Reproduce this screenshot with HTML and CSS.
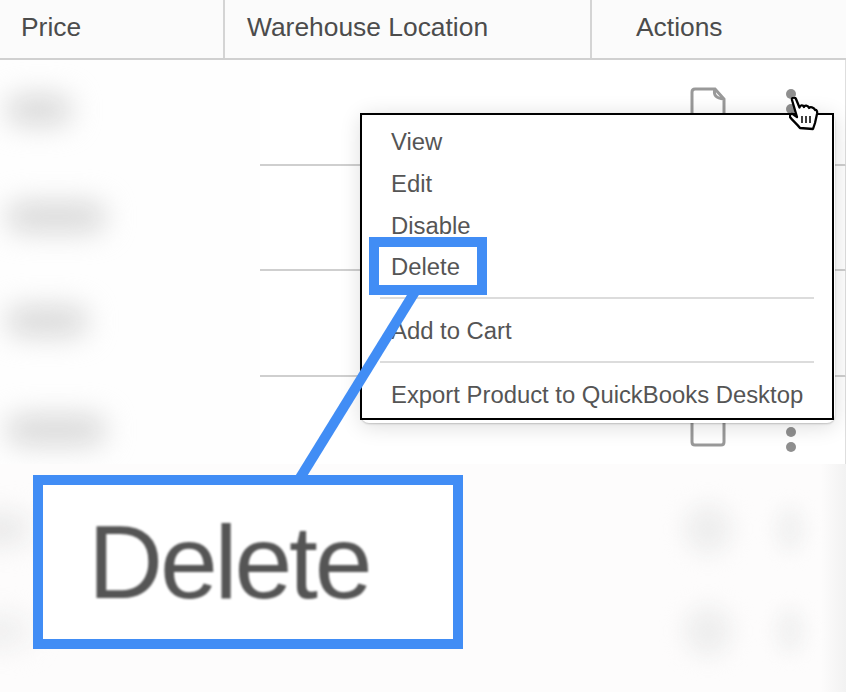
FILE: index.html
```html
<!DOCTYPE html>
<html lang="en">
<head>
  <meta charset="UTF-8" />
  <title>Products</title>
  <link rel="stylesheet" href="styles.css">
</head>
<body>
  <div class="page">

    <div class="head">
      <div class="head-cell price">Price</div>
      <div class="head-cell location">Warehouse Location</div>
      <div class="head-cell actions">Actions</div>
    </div>

    <div class="row">
      <div class="row-left"><span class="blob b1"></span></div>
      <div class="row-right">
        <svg class="doc" width="36" height="37" viewBox="0 0 36 37"><path d="M5 2 H25 L34 12 V32 Q34 35 31 35 H5 Q2 35 2 32 V5 Q2 2 5 2 Z M25 2 Q22 11 34 12" fill="none" stroke="#999" stroke-width="3"/></svg>
        <div class="dots"><i></i><i></i><i></i></div>
      </div>
    </div>
    <div class="row">
      <div class="row-left"><span class="blob b2"></span></div>
      <div class="row-right"></div>
    </div>
    <div class="row">
      <div class="row-left"><span class="blob b3"></span></div>
      <div class="row-right"></div>
    </div>
    <div class="row row-short">
      <div class="row-left"><span class="blob b4"></span></div>
      <div class="row-right">
        <svg class="doc" width="36" height="37" viewBox="0 0 36 37"><path d="M5 2 H25 L34 12 V32 Q34 35 31 35 H5 Q2 35 2 32 V5 Q2 2 5 2 Z" fill="none" stroke="#999" stroke-width="3"/></svg>
        <div class="dots"><i></i><i></i><i></i></div>
      </div>
    </div>

    <div class="faded">
      <div class="faded-row">
        <span class="blob b5"></span>
        <span class="blob-icon"></span>
        <span class="blob-dots"></span>
      </div>
      <div class="faded-row">
        <span class="blob b6"></span>
        <span class="blob-icon"></span>
        <span class="blob-dots"></span>
      </div>
    </div>

    <div class="menu">
      <div class="menu-item">View</div>
      <div class="menu-item">Edit</div>
      <div class="menu-item">Disable</div>
      <div class="menu-item">Delete</div>
      <div class="menu-line"></div>
      <div class="menu-item">Add to Cart</div>
      <div class="menu-line"></div>
      <div class="menu-item">Export Product to QuickBooks Desktop</div>
    </div>
    <div class="menu-outline"></div>

    <svg class="hand" width="30" height="34" viewBox="0 0 30 34">
      <path d="M3 3 C2.5 .5 6 -.5 7 2 L10.5 10.5 C11 8 14 7.5 15 10 C15.5 8 19 8 20 11 C21 9.5 25 10 26 13 C27.5 12.5 28.5 14 28 17 L26 26 L24 32 L11 31 C8 27 3 23 1 20 C0 17 3 16 5 18 L8 20 Z" fill="#fff" stroke="#000" stroke-width="2.3" stroke-linejoin="round"/>
      <path d="M13 19 V26 M17 19 V26 M21 19 V26" stroke="#000" stroke-width="1.5"/>
    </svg>

    <svg class="connector" width="846" height="692" viewBox="0 0 846 692">
      <path d="M416 290 L300 478" stroke="#418df5" stroke-width="10"/>
    </svg>
    <div class="mark"></div>
    <div class="callout"><span class="callout-text">Delete</span></div>

  </div>
</body>
</html>
```

FILE: styles.css
```css
body {
  margin: 0;
  background: #fff;
  font-family: "Liberation Sans", Arial, sans-serif;
  color: #555;
}

.page {
  position: relative;
  width: 846px;
  height: 692px;
  overflow: hidden;
}

/* table header */
.head {
  display: grid;
  grid-template-columns: 225px 367px 1fr;
  height: 58px;
  background: #fbfbfb;
  border-bottom: 2px solid #d0d0d0;
  font-size: 26.4px;
  color: #4c4c4c;
}

.head-cell {
  padding-top: 11px;
  line-height: 32px;
}

.price {
  padding-left: 21px;
  border-right: 2px solid #d4d4d4;
  box-sizing: border-box;
}

.location {
  padding-left: 22px;
  border-right: 2px solid #d4d4d4;
  box-sizing: border-box;
}

.actions {
  padding-left: 44px;
}

/* rows */
.row {
  display: grid;
  grid-template-columns: 260px 1fr;
  height: 105.5px;
}

.row-short {
  height: 87px;
}

.row-left {
  position: relative;
  overflow: hidden;
  background: #fefefe;
}

.row-right {
  display: flex;
  justify-content: flex-end;
  align-items: flex-start;
  gap: 60px;
  padding: 27px 49px 0 0;
  border-bottom: 2px solid #cfcfcf;
  border-right: 1px solid #dedede;
}

.row-short .row-right {
  padding-top: 33px;
  border-bottom: 0;
}

.doc {
  display: block;
}

.dots {
  display: flex;
  flex-direction: column;
  gap: 5px;
  padding: 2px 0 0;
}

.dots i {
  display: block;
  width: 10px;
  height: 10px;
  border-radius: 50%;
  background: #8f8f8f;
}

/* blurred content */
.blob {
  position: absolute;
  height: 30px;
  border-radius: 15px;
  background: #d8d8d8;
  filter: blur(14px);
}

.b1 { left: 6px; top: 35px; width: 66px; }
.b2 { left: 6px; top: 36px; width: 100px; }
.b3 { left: 6px; top: 35px; width: 82px; }
.b4 { left: 6px; top: 38px; width: 100px; }
.b5 { left: -30px; top: 50px; width: 60px; background: #e8e8e8; }
.b6 { left: -30px; top: 50px; width: 60px; background: #eeeeee; }

.faded {
  position: relative;
  height: 228px;
  background: linear-gradient(to right, #fdfcfc 97%, #f2f2f2 100%);
}

.faded-row {
  position: relative;
  height: 102px;
}

.blob-icon {
  position: absolute;
  left: 684px;
  top: 40px;
  width: 48px;
  height: 50px;
  border-radius: 50%;
  background: #eeeeee;
  filter: blur(11px);
}

.blob-dots {
  position: absolute;
  left: 776px;
  top: 42px;
  width: 28px;
  height: 46px;
  border-radius: 50%;
  background: #f1f1f1;
  filter: blur(9px);
}

/* dropdown */
.menu {
  position: absolute;
  left: 361px;
  top: 113px;
  width: 474px;
  height: 310px;
  box-sizing: border-box;
  padding: 8px 0 0 30px;
  border-radius: 8px;
  background: #fff;
  box-shadow: 0 3px 22px rgba(0, 0, 0, 0.14), 0 1px 2px rgba(0, 0, 0, 0.2);
  font-size: 23.85px;
}

.menu-item {
  height: 41.8px;
  line-height: 41.8px;
  white-space: nowrap;
}

.menu-line {
  height: 2px;
  margin: 9px 21px 11px -11px;
  background: #dcdcdc;
}

.menu-outline {
  position: absolute;
  left: 360px;
  top: 113px;
  width: 474px;
  height: 307px;
  box-sizing: border-box;
  border: 2px solid #000;
}

.hand {
  position: absolute;
  left: 789px;
  top: 97px;
}

/* annotation */
.connector {
  position: absolute;
  left: 0;
  top: 0;
}

.mark {
  position: absolute;
  left: 369px;
  top: 237px;
  width: 118px;
  height: 58px;
  box-sizing: border-box;
  border: 10px solid #418df5;
}

.callout {
  position: absolute;
  left: 33px;
  top: 475px;
  width: 430px;
  height: 174px;
  box-sizing: border-box;
  border: 10px solid #418df5;
  background: #fff;
}

.callout-text {
  display: block;
  margin: 17px 0 0 45px;
  font-size: 104px;
  line-height: 120px;
  letter-spacing: -3.2px;
  filter: blur(1px);
}
```
